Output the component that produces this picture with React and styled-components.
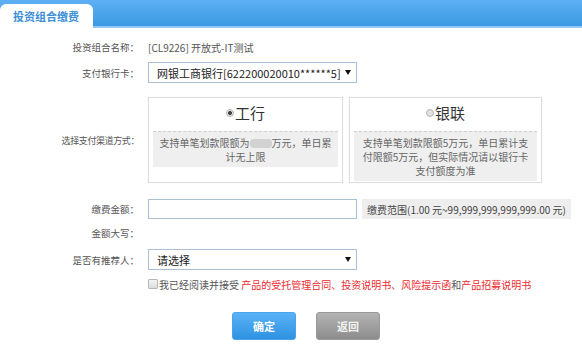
import React from 'react';
import styled, { createGlobalStyle } from 'styled-components';

const Global = createGlobalStyle`
  html, body { margin: 0; padding: 0; background: #fff; }
  body {
    font-family: "Noto Sans CJK SC", "Noto Sans", sans-serif;
    width: 582px;
    height: 360px;
    overflow: hidden;
  }
`;

const Header = styled.div`
  height: 26px;
  background: linear-gradient(#5eb0f4, #3a99e1);
  border-bottom: 2px solid #8fc8f3;
  display: flex;
  align-items: flex-end;
`;

const Tab = styled.div`
  width: 93px;
  height: 24px;
  margin-bottom: -2px;
  background: #fff;
  border-radius: 6px 6px 0 0;
  box-sizing: border-box;
  padding-left: 13px;
  display: flex;
  align-items: center;
  font-size: 11px;
  font-weight: bold;
  color: #3c8fd6;
`;

const Form = styled.div`
  display: flex;
  flex-direction: column;
  padding-top: 8px;
`;

const Row = styled.div`
  display: grid;
  grid-template-columns: 139px 1fr;
  column-gap: 9px;
  align-items: center;
  margin-top: ${p => p.$mt || 0}px;
  min-height: ${p => p.$h || 22}px;
`;

const Label = styled.div`
  text-align: right;
  font-size: ${p => (p.$compact ? '9px' : '9.5px')};
  color: #555;
  white-space: nowrap;
  letter-spacing: ${p => (p.$compact ? '-0.4px' : '0')};
`;

const Value = styled.div`
  font-size: 10px;
  color: #555;
  white-space: nowrap;
`;

const Field = styled.div`
  display: flex;
  align-items: center;
`;

const SelectBox = styled.div`
  width: 209px;
  height: 21px;
  box-sizing: border-box;
  border: 1px solid #a9bfd6;
  display: flex;
  align-items: center;
  justify-content: space-between;
  padding: 0 5px 0 8px;
  font-size: 11px;
  color: #222;
  white-space: nowrap;
  background: #fff;
`;

const Caret = () => (
  <svg width="6" height="5" viewBox="0 0 6 5">
    <path d="M0 0 L6 0 L3 5 Z" fill="#111" />
  </svg>
);

const Cards = styled.div`
  display: flex;
  gap: 6px;
`;

const Card = styled.div`
  width: ${p => p.$w}px;
  box-sizing: border-box;
  border: 1px solid #dedede;
  box-shadow: 0 0 1px rgba(0, 0, 0, 0.08);
  padding: 0 4px 1px;
  display: flex;
  flex-direction: column;
`;

const CardTitle = styled.div`
  height: 33px;
  box-sizing: border-box;
  padding-bottom: 4px;
  display: flex;
  align-items: center;
  justify-content: center;
  gap: 1px;
  font-size: 15px;
  color: #333;
`;

const Radio = styled.span`
  width: 8px;
  height: 8px;
  border-radius: 50%;
  box-sizing: border-box;
  border: 1px solid #b5b5b5;
  background: ${p => (p.$on ? 'radial-gradient(circle, #444 0 1.8px, #e6e6e6 2.2px)' : '#e2e2e2')};
`;

const Note = styled.div`
  border-top: 1px dashed #cfcfcf;
  background: #efefef;
  padding: 4px 5px 3px;
  text-align: center;
  font-size: 10px;
  line-height: 14px;
  color: #666;
`;

const Mask = styled.span`
  display: inline-block;
  width: 22px;
  height: 9px;
  border-radius: 4px;
  background: #d2d2d2;
  vertical-align: -1px;
`;

const Input = styled.div`
  width: 209px;
  height: 20px;
  box-sizing: border-box;
  border: 1px solid #a9bfd6;
  background: #fff;
`;

const Range = styled.div`
  margin-left: 5px;
  height: 20px;
  display: flex;
  align-items: center;
  padding: 0 5px;
  background: #eeeeee;
  font-size: 10px;
  color: #444;
  white-space: nowrap;
`;

const Agree = styled.div`
  display: flex;
  align-items: center;
  font-size: 10px;
  color: #555;
  white-space: nowrap;
`;

const Check = styled.span`
  width: 10px;
  height: 10px;
  box-sizing: border-box;
  border: 1px solid #b8b8b8;
  border-radius: 1px;
  background: linear-gradient(#f4f4f4, #dcdcdc);
  margin-right: 1px;
`;

const Red = styled.span`
  color: #ee2a2f;
`;

const Buttons = styled.div`
  display: flex;
  gap: 20px;
  padding-left: 84px;
`;

const Button = styled.div`
  width: 64px;
  height: 28px;
  box-sizing: border-box;
  border-radius: 3px;
  display: flex;
  align-items: center;
  justify-content: center;
  font-size: 11px;
  font-weight: bold;
  color: ${p => (p.$primary ? '#fff' : '#f2f2f2')};
  background: ${p => (p.$primary ? 'linear-gradient(#5ab2f7, #2d92e1)' : 'linear-gradient(#b4b4b4, #8d8d8d)')};
  border: 1px solid ${p => (p.$primary ? '#4aa3e8' : '#999')};
`;

export default function App() {
  return (
    <>
      <Global />
      <Header>
        <Tab>投资组合缴费</Tab>
      </Header>
      <Form>
        <Row $h={22}>
          <Label>投资组合名称：</Label>
          <Value>[CL9226] 开放式-IT测试</Value>
        </Row>
        <Row $mt={3} $h={23}>
          <Label>支付银行卡：</Label>
          <Field>
            <SelectBox>
              <span>网银工商银行[622200020010******5]</span>
              <Caret />
            </SelectBox>
          </Field>
        </Row>
        <Row $mt={13} $h={85}>
          <Label $compact>选择支付渠道方式：</Label>
          <Cards>
            <Card $w={195}>
              <CardTitle>
                <Radio $on />
                <span>工行</span>
              </CardTitle>
              <Note>
                支持单笔划款限额为<Mask />万元，单日累计无上限
              </Note>
            </Card>
            <Card $w={193}>
              <CardTitle>
                <Radio />
                <span>银联</span>
              </CardTitle>
              <Note>支持单笔划款限额5万元，单日累计支付限额5万元，但实际情况请以银行卡支付额度为准</Note>
            </Card>
          </Cards>
        </Row>
        <Row $mt={15} $h={22}>
          <Label>缴费金额：</Label>
          <Field>
            <Input />
            <Range>缴费范围(1.00 元~99,999,999,999,999.00 元)</Range>
          </Field>
        </Row>
        <Row $mt={2} $h={22}>
          <Label>金额大写：</Label>
          <Value />
        </Row>
        <Row $mt={4} $h={23}>
          <Label>是否有推荐人：</Label>
          <Field>
            <SelectBox>
              <span>请选择</span>
              <Caret />
            </SelectBox>
          </Field>
        </Row>
        <Row $mt={3} $h={20}>
          <span />
          <Agree>
            <Check />
            我已经阅读并接受&nbsp;<Red>产品的受托管理合同、投资说明书、风险提示函</Red>和<Red>产品招募说明书</Red>
          </Agree>
        </Row>
        <Row $mt={18} $h={28}>
          <span />
          <Buttons>
            <Button $primary>确定</Button>
            <Button>返回</Button>
          </Buttons>
        </Row>
      </Form>
    </>
  );
}
